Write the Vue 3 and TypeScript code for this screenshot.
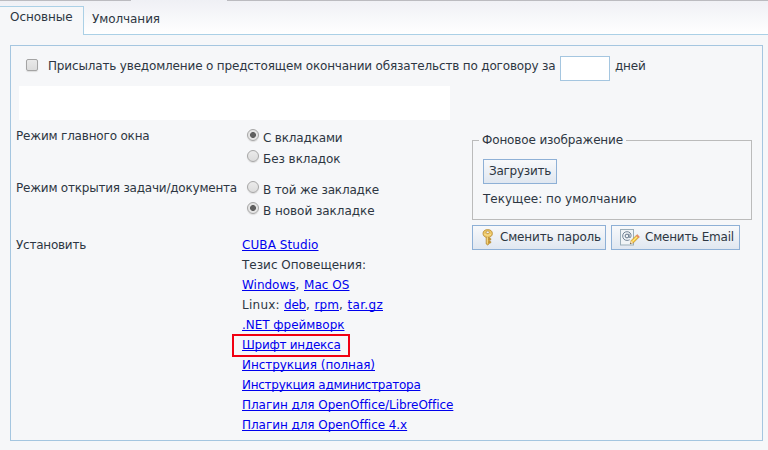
<script setup lang="ts">
import { ref } from 'vue'

interface TextPart {
  text: string
  link: boolean
  width: number
}

const remind = ref(false)
const days = ref('')

const groups = ref([
  {
    label: 'Режим главного окна',
    width: 133.5,
    options: [
      { text: 'С вкладками', width: 79.5 },
      { text: 'Без вкладок', width: 77.5 },
    ],
    selected: 0,
  },
  {
    label: 'Режим открытия задачи/документа',
    width: 221,
    options: [
      { text: 'В той же закладке', width: 116 },
      { text: 'В новой закладке', width: 111.5 },
    ],
    selected: 1,
  },
])

const link = (text: string, width: number): TextPart => ({ text, link: true, width })
const plain = (text: string, width: number): TextPart => ({ text, link: false, width })

const downloads: { parts: TextPart[]; marked?: boolean }[] = [
  { parts: [link('CUBA Studio', 76.5)] },
  { parts: [plain('Тезис Оповещения:', 124)] },
  { parts: [link('Windows', 53.5), plain(', ', 8.5), link('Mac OS', 45.5)] },
  { parts: [plain('Linux: ', 42), link('deb', 22), plain(', ', 8.5), link('rpm', 24.5), plain(', ', 8.5), link('tar.gz', 35.5)] },
  { parts: [link('.NET фреймворк', 102.5)] },
  { parts: [link('Шрифт индекса', 98.5)], marked: true },
  { parts: [link('Инструкция (полная)', 133)] },
  { parts: [link('Инструкция администратора', 178.5)] },
  { parts: [link('Плагин для OpenOffice/LibreOffice', 211)] },
  { parts: [link('Плагин для OpenOffice 4.x', 165)] },
]

// Tracks the letters of a caption so that it takes the given width.
const vFit = {
  mounted(el: HTMLElement, binding: { value: number }) {
    const count = (el.textContent ?? '').length
    const natural = el.getBoundingClientRect().width
    el.style.letterSpacing = `${(binding.value - natural) / count}px`
  },
}
</script>

<template>
  <main class="page">
    <nav class="tabs">
      <div class="tab active"><span v-fit="62.5">Основные</span></div>
      <div class="tab"><span v-fit="68">Умолчания</span></div>
    </nav>
    <section class="panel">
      <div class="reminder">
        <input v-model="remind" class="check" type="checkbox" />
        <div class="reminder-text"><span v-fit="507.5">Присылать уведомление о предстоящем окончании обязательств по договору за</span></div>
        <input v-model="days" class="days" type="text" />
        <span v-fit="30.500">дней</span>
      </div>
      <div class="blank"></div>
      <div class="columns">
        <div class="settings">
          <div v-for="(g, i) in groups" :key="g.label" class="group">
            <div class="label"><span v-fit="g.width">{{ g.label }}</span></div>
            <div class="options">
              <label v-for="(o, j) in g.options" :key="o.text" class="option">
                <input v-model="g.selected" class="radio" type="radio" :name="'group' + i" :value="j" />
                <span v-fit="o.width">{{ o.text }}</span>
              </label>
            </div>
          </div>
          <div class="group install">
            <div class="label"><span v-fit="70">Установить</span></div>
            <div class="links">
              <div v-for="(row, i) in downloads" :key="i" class="link-row" :class="{ marked: row.marked }">
                <template v-for="(p, k) in row.parts" :key="k"><a v-if="p.link" v-fit="p.width" href="#">{{ p.text }}</a><span v-else v-fit="p.width">{{ p.text }}</span></template>
              </div>
            </div>
          </div>
        </div>
        <aside class="side">
          <fieldset class="background">
            <legend><span v-fit="141">Фоновое изображение</span></legend>
            <button class="btn"><span v-fit="62">Загрузить</span></button>
            <div class="current"><span v-fit="153.500">Текущее: по умолчанию</span></div>
          </fieldset>
          <div class="actions">
            <button class="btn password">
              <svg class="key" width="12" height="17" viewBox="0 0 12 17">
                <path d="M4.2 7.5h3v7.2L5.7 16l-1.5-1.1z" fill="#e5b94e" stroke="#a87b27" stroke-width=".7" />
                <path d="M6.8 9.5h2v1.6h-2zm0 3h2v1.5h-2z" fill="#d5a43b" stroke="#a87b27" stroke-width=".5" />
                <path fill-rule="evenodd" d="M5.700.6C2.800.6 1 2.200 1 4.500s1.800 4 4.700 4 4.700-1.700 4.700-4S8.600.6 5.700.6zm0 1.500c1 0 1.600.5 1.600 1.200S6.700 4.500 5.700 4.500 4.100 4 4.100 3.300s.6-1.200 1.600-1.200z" fill="#edc765" stroke="#b68a35" stroke-width=".8" />
                <path d="M2.300 5.300Q5.700 7.500 9 5.300M5.300 8v6.500" fill="none" stroke="#fae5a0" stroke-width=".8" />
              </svg>
              <span v-fit="101">Сменить пароль</span>
            </button>
            <button class="btn email">
              <svg class="mail" width="20" height="17" viewBox="0 0 20 17">
                <rect x=".5" y=".5" width="13" height="15.500" fill="#f0f4f6" stroke="#9baeb9" />
                <circle cx="7" cy="7" r="1.900" fill="none" stroke="#66788b" />
                <path d="M9 4.700v3.500q1.900 1.200 2.100-1.300C11.200 4.200 9.400 2.700 7 2.700 4.400 2.700 2.700 4.500 2.700 7s1.700 4.400 4.300 4.400c1 0 1.900-.2 2.600-.6" fill="none" stroke="#66788b" stroke-width=".9" />
                <path d="M10.300 14.800l.9-3.300L17 5.700l2.300 2.200-5.800 5.900z" fill="#f5c83f" stroke="#b9822c" stroke-width=".6" />
                <path d="M12.200 12.600l5.700-5.700" stroke="#fff0a0" />
                <path d="M15.900 6.800L17.200 5.500l2.300 2.300-1.200 1.200z" fill="#e68a6a" />
                <path d="M10.300 14.800l.8-2.800 1.900 1.900z" fill="#f7dfc1" />
                <path d="M10.100 15l.4-1.300.9.900z" fill="#333" />
              </svg>
              <span v-fit="89">Сменить Email</span>
            </button>
          </div>
        </aside>
      </div>
    </section>
  </main>
</template>

<style>
body { margin: 0; }
</style>

<style scoped>
* { box-sizing: border-box; }
.page {
  width: 768px;
  height: 450px;
  overflow: hidden;
  background: #f6f7f9;
  color: #2d3642;
  font: 12px/20px "DejaVu Sans", Verdana, sans-serif;
  white-space: nowrap;
}
.tabs {
  display: flex;
  height: 35px;
  border-bottom: 1px solid #abd0e6;
  background:
    linear-gradient(90deg, #bbbbc0 131px, transparent 131px 227px, #bbbbc0 227px) 0 0 / 100% 1px no-repeat,
    linear-gradient(#eff0f5, #fff);
}
.tab { padding: 9px 0 0 8px; }
.tab.active {
  width: 84px;
  height: 29px;
  margin-top: 6px;
  padding: 0 0 0 10px;
  border: solid #abd0e6;
  border-width: 1px 1px 0 0;
  background: #f6f7f9;
}
.panel {
  width: 753px;
  height: 396px;
  margin: 10px 0 0 10px;
  border: 1px solid #a5c6e0;
}
.reminder {
  display: flex;
  height: 40px;
  padding: 10px 0 0 15px;
}
.check {
  appearance: none;
  width: 12px;
  height: 12px;
  margin: 3px 10px 0 0;
  border: 1px solid #a4a4a4;
  border-radius: 2px;
  background: linear-gradient(#e9e9e9, #dcdcdc);
  box-shadow: 0 1px 1px #ddd;
}
.reminder-text { width: 512px; }
.days {
  width: 50px;
  height: 25px;
  margin: 0 5px 0 0;
  border: 1px solid #a5c6e0;
  background: #fff;
}
.blank {
  width: 431px;
  height: 34px;
  margin-left: 8px;
  background: #fff;
}
.columns { display: flex; }
.settings { width: 461px; padding: 6px 0 0 5px; }
.group { display: flex; height: 52px; }
.label { width: 226px; }
.options { padding-left: 5px; }
.option { display: flex; height: 21px; gap: 4px; }
.option span { padding-top: 2px; }
.radio {
  appearance: none;
  width: 12px;
  height: 12px;
  margin: 3px 0 0;
  border: 1px solid #a6a6a6;
  border-radius: 50%;
  background: linear-gradient(#ebebeb, #dcdcdc);
  box-shadow: 0 1px 1px #ddd;
}
.radio:checked { background: radial-gradient(circle, #606060 2.6px, #e5e5e5 3.3px); }
.install { padding-top: 5px; }
.link-row { position: relative; height: 20px; }
a { color: #0000ee; text-decoration: underline; text-decoration-skip-ink: none; }
.link-row span { white-space: pre; }
.marked::after {
  content: "";
  position: absolute;
  box-sizing: border-box;
  left: -10px;
  top: -1px;
  width: 118px;
  height: 23px;
  border: 2px solid #f10012;
}
.side { width: 280px; padding-top: 10px; }
.background {
  width: 280px;
  height: 90px;
  margin: 0;
  padding: 9px 10px 0;
  border: 1px solid #bbb;
}
legend { margin-left: -4px; padding: 0 3px; }
.btn {
  height: 25px;
  padding: 0 5px;
  border: 1px solid #8eb0d6;
  background: linear-gradient(#f8f9fb, #e0e7f0);
  color: inherit;
  font: inherit;
  line-height: 23px;
  text-align: left;
}
.background .btn { display: block; width: 74px; }
.current { margin-top: 5px; }
.actions { display: flex; gap: 5px; margin-top: 5px; }
.actions .btn { display: flex; }
.actions svg { flex: none; }
.password { width: 134px; }
.email { width: 129px; }
.key { margin: 3px 6px 0 4px; }
.mail { margin: 3px 5px 0 3px; }
</style>
